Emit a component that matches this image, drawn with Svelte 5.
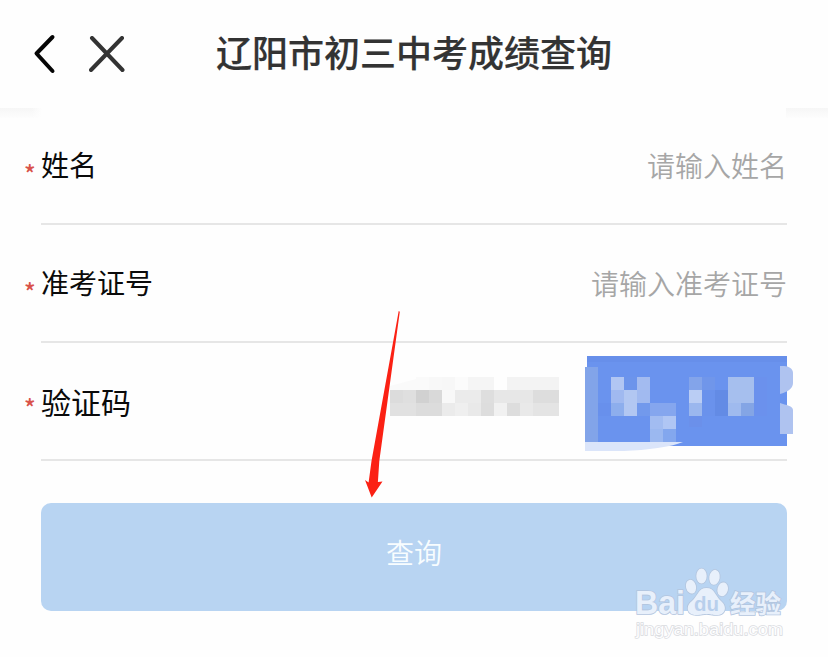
<script>
  const blur = [
    [26, 0, 13, '#fafafa'], [39, 0, 13, '#f8f8f8'], [52, 0, 13, '#f7f7f7'], [65, 0, 13, '#fbfbfb'],
    [78, 0, 26, '#f5f5f5'], [117, 0, 52, '#f3f3f3'],
    [0, 13, 13, '#dcdcdc'], [13, 13, 13, '#dfdfdf'], [26, 13, 13, '#d1d1d1'], [39, 13, 13, '#d9d9d9'],
    [52, 13, 13, '#f8f8f8'], [65, 13, 26, '#ebebeb'], [91, 13, 13, '#dedede'], [104, 13, 39, '#e7e7e7'],
    [143, 13, 26, '#dddddd'],
    [0, 26, 26, '#e1e1e1'], [26, 26, 26, '#dcdcdc'], [52, 26, 13, '#ebebeb'], [65, 26, 13, '#efefef'],
    [78, 26, 13, '#e9e9e9'], [91, 26, 13, '#dddddd'], [104, 26, 13, '#f1f1f1'], [117, 26, 13, '#dddddd'],
    [130, 26, 13, '#e9e9e9'], [143, 26, 26, '#e4e4e4'],
  ];
  const captcha = [
    [26, 21, 13, 13, '#b1c6f3'], [39, 21, 13, 13, '#6c94eb'], [52, 21, 13, 13, '#a3bbf0'],
    [26, 34, 13, 13, '#a0b9f0'], [39, 34, 13, 26, '#b2c7f2'], [52, 34, 13, 13, '#a1baf0'],
    [13, 47, 13, 13, '#6890ec'], [26, 47, 13, 13, '#8daeed'], [52, 47, 13, 13, '#7299ec'],
    [65, 47, 26, 13, '#85a6ee'], [65, 60, 13, 13, '#a2bcf1'], [78, 60, 13, 13, '#b0c6f4'],
    [65, 73, 13, 13, '#9bb8f0'], [78, 73, 13, 13, '#83a7ee'],
    [104, 21, 13, 13, '#83a4ea'], [117, 21, 13, 13, '#7096ea'], [104, 34, 13, 13, '#bacdf4'],
    [104, 47, 13, 13, '#9bb7ee'], [104, 60, 13, 11, '#6b90ea'], [117, 34, 13, 26, '#6a92ec'],
    [130, 34, 13, 26, '#638be5'],
    [143, 21, 26, 26, '#a6bfee'], [143, 47, 13, 13, '#9fbaee'], [156, 47, 13, 13, '#84a5e5'],
    [169, 21, 13, 39, '#6b91ed'],
  ];
</script>

<div class="page">
  <header>
    <svg class="back" width="24" height="42" viewBox="0 0 24 42"><path d="M20.5 4 4.500 20.500 20.500 38" /></svg>
    <svg class="close" width="36" height="36" viewBox="0 0 36 36"><path d="M3 2 33.500 34M33 2 2 34" /></svg>
    <h1>辽阳市初三中考成绩查询</h1>
  </header>
  <div class="shade"><i></i><i class="right"></i></div>

  <main>
    <label class="row"><span class="star">*</span><span class="name">姓名</span><span class="hint">请输入姓名</span></label>
    <label class="row"><span class="star">*</span><span class="name">准考证号</span><span class="hint">请输入准考证号</span></label>
    <div class="row code">
      <span class="star">*</span><span class="name">验证码</span>
      <svg class="blurred" width="169" height="39" viewBox="0 0 169 39">
        {#each blur as [x, y, w, c]}<rect {x} {y} width={w} height="13" fill={c} />{/each}
        <path d="M0 13V9L26 2V13Z" fill="#fafafa" />
      </svg>
      <svg class="captcha" width="208" height="96" viewBox="0 0 208 96" shape-rendering="crispEdges">
        <rect x="2" width="200" height="90" fill="#6a93ee" />
        <rect x="2" width="200" height="6" fill="#678fea" />
        <rect y="11" width="13" height="76" fill="#82a4e9" />
        {#each captcha as [x, y, w, h, c]}<rect {x} {y} width={w} height={h} fill={c} />{/each}
        <g shape-rendering="auto">
          <path d="M0 86H98C86 91 62 94 39 95H0Z" fill="#dbe5fa" />
          <path d="M195 10H199C204 10 208 13 208 17V27C208 33 202 36 195 38Z" fill="#afc3f0" />
          <path d="M195 47C201 49 208 50 208 54V78H195Z" fill="#afc3f0" />
        </g>
      </svg>
    </div>
    <button><span>查询</span></button>
  </main>

  <svg class="arrow" width="36" height="188" viewBox="0 0 36 188">
    <path d="M33.700 0 34.800 .8 14.300 150 12.900 171 17.500 170.500 6.700 186.500 0 169 3.600 171.500 6.500 150Z" fill="#fb2114" />
  </svg>

  <svg class="mark" width="160" height="84" viewBox="0 0 160 84">
    <g fill="#e8f0fb" stroke="#b3c5de" stroke-width="1.600" paint-order="stroke">
      <ellipse cx="60" cy="26.700" rx="5" ry="7" transform="rotate(-14 60 26.700)" />
      <ellipse cx="70.500" cy="16" rx="5.200" ry="7.500" />
      <ellipse cx="83.500" cy="17.300" rx="5.200" ry="7.500" transform="rotate(10 83.500 17.300)" />
      <ellipse cx="91.700" cy="29.300" rx="5.200" ry="7" transform="rotate(14 91.700 29.300)" />
      <path d="M75.500 28C84 28 84 36 90 41C97 47 94 55 86 55C80 55 80 54 75.500 54C71 54 71 55 65 55C56 55 54 46 61 41C67 36 67 28 75.500 28Z" />
      <text x="4" y="53.500" font-size="33" font-weight="700" textLength="50" lengthAdjust="spacingAndGlyphs">Bai</text>
      <text class="cn" x="99" y="52.500" font-size="25" font-weight="700" textLength="51" lengthAdjust="spacingAndGlyphs">经验</text>
    </g>
    <text x="63" y="51" font-size="21" font-weight="700" fill="#b8cfec" textLength="25" lengthAdjust="spacingAndGlyphs">du</text>
    <text x="5" y="74.500" font-size="17" fill="#fdfdfe" stroke="#d9dbde" stroke-width="1.400" paint-order="stroke" textLength="147" lengthAdjust="spacingAndGlyphs">jingyan.baidu.com</text>
  </svg>
</div>

<style>
  :global(body) { margin: 0; background: #fefefe; }
  .page { position: relative; width: 828px; height: 657px; overflow: hidden; background: #fefefe; font-family: "Noto Sans CJK SC", sans-serif; }
  header { display: flex; align-items: center; height: 108px; box-sizing: border-box; padding-left: 32px; }
  svg { display: block; flex: none; }
  .back { fill: none; stroke: #050505; stroke-width: 4; stroke-linecap: round; stroke-linejoin: round; }
  .close { margin-left: 33px; fill: none; stroke: #333; stroke-width: 4; stroke-linecap: round; }
  h1 { margin: 0 0 7px 91px; font-size: 36px; line-height: 52px; font-weight: 500; color: #333; -webkit-text-stroke: .2px #333; white-space: nowrap; }
  .shade { display: flex; justify-content: space-between; height: 10px; margin-bottom: -10px; }
  .shade i { width: 42px; background: linear-gradient(90deg, transparent 75%, #fefefe), linear-gradient(#f6f6f6, #fdfdfd); }
  .shade .right { background: linear-gradient(#f6f6f6, #fdfdfd); }
  main { padding: 0 41px; }
  .row { display: flex; align-items: center; height: 118px; box-sizing: border-box; border-bottom: 2px solid #e6e6e6; font-size: 28px; line-height: 40px; }
  .row:first-child { height: 117px; }
  .star { width: 17px; margin-left: -17px; padding-top: 15px; box-sizing: border-box; color: #d9534a; font-size: 24px; font-weight: 500; line-height: 28px; }
  .name { margin-bottom: 3px; color: #0a0a0a; }
  .hint { margin: 0 0 1px auto; color: #a6a6a6; font-weight: 350; }
  .code .name { margin-bottom: 0; font-size: 30px; }
  .code .star { padding-top: 12px; }
  .blurred { margin: -10px 0 0 auto; }
  .captcha { margin: 5px -6px 0 26px; }
  button { display: block; width: 746px; height: 108px; margin-top: 42px; padding: 0 0 11px; border: 0; border-radius: 10px; background: #b8d4f2; color: #f8fdff; font: 350 28px "Noto Sans CJK SC", sans-serif; }
  .arrow { position: absolute; left: 365px; top: 311px; }
  .mark { position: absolute; left: 631px; top: 560px; font-family: "Liberation Sans", sans-serif; }
  .cn { font-family: "Noto Sans CJK SC", sans-serif; }
</style>
